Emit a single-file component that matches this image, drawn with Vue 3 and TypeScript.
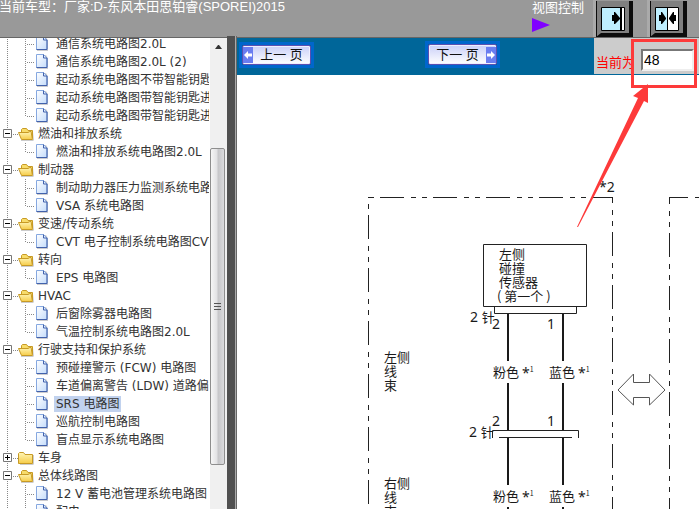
<script setup lang="ts">
import { ref } from 'vue'

interface TreeRow {
  label: string
  kind: 'leaf' | 'open' | 'closed'
  last?: boolean
}

const leaf = (label: string, last = false): TreeRow => ({ label, kind: 'leaf', last })
const folder = (label: string, open = true): TreeRow => ({ label, kind: open ? 'open' : 'closed' })

const rows: TreeRow[] = [
  leaf('通信系统电路图2.0L'),
  leaf('通信系统电路图2.0L (2)'),
  leaf('起动系统电路图不带智能钥匙进入'),
  leaf('起动系统电路图带智能钥匙进入'),
  leaf('起动系统电路图带智能钥匙进入', true),
  folder('燃油和排放系统'),
  leaf('燃油和排放系统电路图2.0L', true),
  folder('制动器'),
  leaf('制动助力器压力监测系统电路图'),
  leaf('VSA 系统电路图', true),
  folder('变速/传动系统'),
  leaf('CVT 电子控制系统电路图CVT', true),
  folder('转向'),
  leaf('EPS 电路图', true),
  folder('HVAC'),
  leaf('后窗除雾器电路图'),
  leaf('气温控制系统电路图2.0L', true),
  folder('行驶支持和保护系统'),
  leaf('预碰撞警示 (FCW) 电路图'),
  leaf('车道偏离警告 (LDW) 道路偏离'),
  leaf('SRS 电路图'),
  leaf('巡航控制电路图'),
  leaf('盲点显示系统电路图', true),
  folder('车身', false),
  folder('总体线路图'),
  leaf('12 V 蓄电池管理系统电路图'),
  leaf('配电'),
]

const selected = ref(20)
const page = ref('48')
</script>

<template>
  <div class="app">
    <header class="top">
      <h1 class="model">当前车型：厂家:D-东风本田思铂睿(SPOREI)2015</h1>
      <div class="view">
        <span>视图控制</span>
        <svg width="18" height="16" viewBox="0 0 18 16" aria-hidden="true">
          <path d="M0 1L18 8L0 15Z" fill="#8000ff" />
        </svg>
      </div>
      <div class="modes">
        <button class="mode" type="button" aria-label="单页视图">
          <svg width="37" height="36" viewBox="0 0 37 36">
            <path d="M0 0H37V36H0Z" fill="#0c0c0c" />
            <path d="M1 0H33V33L30 35H1Z" fill="#808080" />
            <path d="M0 36L5 32H34V0H37V36Z" fill="#0c0c0c" />
            <path d="M5.500 6.500H28.500V29.500H5.500Z" fill="#bfefff" stroke="#000" />
            <path d="M25 7H28V29H25Z" fill="#fff" />
            <path d="M24 7H26V29H24Z" />
            <path d="M16 14H18V11H19L24 17V18L19 23H18V20H16Z" />
          </svg>
        </button>
        <button class="mode" type="button" aria-label="双页视图">
          <svg width="37" height="36" viewBox="0 0 37 36">
            <path d="M0 0H37V36H0Z" fill="#0c0c0c" />
            <path d="M1 0H33V33L30 35H1Z" fill="#808080" />
            <path d="M0 36L5 32H34V0H37V36Z" fill="#0c0c0c" />
            <path d="M5.500 6.500H28.500V29.500H5.500Z" fill="#fff" stroke="#000" />
            <path d="M6 7H17V29H6Z" fill="#bfefff" />
            <path d="M17 7H18V29H17Z" />
            <path d="M9 14H11V11H12L16 17V18L12 23H11V20H9Z" />
            <path d="M26 14H24V11H23L19 17V18L23 23H24V20H26Z" />
          </svg>
        </button>
        <button class="mode" type="button" aria-label="全页视图">
          <svg width="37" height="36" viewBox="0 0 37 36">
            <path d="M0 0H37V36H0Z" fill="#0c0c0c" />
            <path d="M1 0H33V33L30 35H1Z" fill="#808080" />
          </svg>
        </button>
      </div>
    </header>

    <div class="body">
      <nav class="side">
        <ul class="tree">
          <li
            v-for="(row, i) in rows"
            :key="i"
            class="row"
            :class="[row.kind, { last: row.last, selected: i === selected }]"
          >
            <template v-if="row.kind === 'leaf'">
              <span class="trunk"></span>
              <span class="branch"></span>
              <svg class="icon" width="16" height="18" viewBox="0 0 16 18" aria-hidden="true">
                <path d="M2 2H11L13 5V16H2Z" fill="#9a9aa0" opacity="0.500" />
                <path d="M1.500 1.500H8.500L12 5V14.500H1.500Z" fill="url(#sheet)" stroke="#86a8e0" />
                <path d="M8.500 1.500V5H12V14.500H1.500" fill="none" stroke="#4262ac" />
              </svg>
            </template>
            <template v-else>
              <button class="toggle" type="button" :aria-label="row.kind === 'open' ? '收起' : '展开'">
                <svg width="12" height="18" viewBox="0 0 12 18">
                  <path d="M3.500 4.500H11.500V12.500H3.500Z" fill="#fff" stroke="#777" />
                  <path d="M5 8H10V9H5Z" />
                  <path v-if="row.kind === 'closed'" d="M7 6H8V11H7Z" />
                </svg>
              </button>
              <span class="link"></span>
              <svg class="icon folder" width="18" height="18" viewBox="0 0 18 18" aria-hidden="true">
                <template v-if="row.kind === 'open'">
                  <path d="M3 15H15L16 7V15L15 16H3Z" fill="#9a9a9a" opacity="0.500" />
                  <path d="M3.500 13V4.500L4.500 3.500H8.500L10 5.500H14.500V13Z" fill="#f8dc6a" stroke="#c79a25" />
                  <path d="M0.500 7.500H10L12 6.500H13L14.500 14.500H3.500Z" fill="url(#gold)" stroke="#c79a25" />
                </template>
                <template v-else>
                  <path d="M2 15H15V6H16V15L15 16H2Z" fill="#9a9a9a" opacity="0.500" />
                  <path d="M0.500 14.500V4.500L1.500 3.500H5.500L7 5.500H14.500V14.500Z" fill="url(#gold)" stroke="#c79a25" />
                </template>
              </svg>
            </template>
            <a class="label" href="#" @click.prevent="selected = i">{{ row.label }}</a>
          </li>
        </ul>
        <div class="scroll" aria-hidden="true">
          <svg class="up" width="17" height="17" viewBox="0 0 17 17">
            <path d="M5 11L8 7H9L12 11Z" fill="#333" />
          </svg>
          <div class="thumb"><i></i><i></i><i></i></div>
        </div>
      </nav>

      <div class="divider"></div>

      <main class="main">
        <div class="bar">
          <button class="pager prev" type="button">
            <span class="face">
              <span class="cap"><svg width="10" height="16" viewBox="0 0 10 16"><path d="M1 8L5 4V6.500H9V9.500H5V12Z" fill="#fff" /></svg></span>
              <span class="word">上一 页</span>
            </span>
          </button>
          <button class="pager next" type="button">
            <span class="face">
              <span class="word">下一 页</span>
              <span class="cap"><svg width="10" height="16" viewBox="0 0 10 16"><path d="M9 8L5 4V6.500H1V9.500H5V12Z" fill="#fff" /></svg></span>
            </span>
          </button>
          <div class="current">
            <label for="page">当前为</label>
            <input id="page" v-model="page" type="text" />
          </div>
        </div>

        <svg class="diagram" width="462" height="434" viewBox="237 75 462 434">
          <defs>
            <linearGradient id="sheet" x1="0" y1="0" x2="1" y2="1">
              <stop offset="0" stop-color="#fff" />
              <stop offset="1" stop-color="#c4dcfb" />
            </linearGradient>
            <linearGradient id="gold" x1="0" y1="0" x2="0" y2="1">
              <stop offset="0" stop-color="#fff6b8" />
              <stop offset="1" stop-color="#f6cc48" />
            </linearGradient>
          </defs>
          <g class="dash">
            <path d="M368 197.500H613" stroke-dashoffset="41" />
            <path d="M368.500 197V509" stroke-dashoffset="35" />
            <path d="M612.500 197V509" stroke-dashoffset="18" />
            <path d="M669 197.500H699" stroke-dashoffset="5" />
            <path d="M669.500 197V509" stroke-dashoffset="17" />
          </g>
          <g class="line">
            <path d="M483.500 244.500H586.500V306.500H483.500Z" />
            <path d="M494.500 306.500V313.500H576.500V306.500" />
            <path d="M492.500 438V430.500H578.500V438M499 437.500H572" />
          </g>
          <path class="wire" d="M508 314V361M508 383V430M508 438V485M508 507V509M563 314V361M563 383V430M563 438V485M563 507V509" />
          <path class="double" d="M618 390L633.500 374V382.500H649.500V374L665 390L649.500 405V397.500H633.500V405Z" />
          <g class="text">
            <text class="num" x="599" y="192">*2</text>
            <text x="499" y="259">左侧</text>
            <text x="499" y="273">碰撞</text>
            <text x="499" y="287">传感器</text>
            <text x="497" y="301">( 第一个 )</text>
            <text class="num" x="470" y="322">2 <tspan class="cjk">针</tspan></text>
            <text class="num" x="492" y="329">2</text>
            <text class="num" x="547" y="329">1</text>
            <text x="384" y="362">左侧</text>
            <text x="384" y="376">线</text>
            <text x="384" y="390">束</text>
            <text x="493" y="377">粉色 <tspan class="num" dy="1">*</tspan><tspan class="sup" dy="-6">1</tspan></text>
            <text x="549" y="377">蓝色 <tspan class="num" dy="1">*</tspan><tspan class="sup" dy="-6">1</tspan></text>
            <text class="num" x="492" y="426">2</text>
            <text class="num" x="547" y="426">1</text>
            <text class="num" x="469" y="437">2 <tspan class="cjk">针</tspan></text>
            <text x="384" y="488">右侧</text>
            <text x="384" y="502">线</text>
            <text x="384" y="516">束</text>
            <text x="493" y="501">粉色 <tspan class="num" dy="1">*</tspan><tspan class="sup" dy="-6">1</tspan></text>
            <text x="549" y="501">蓝色 <tspan class="num" dy="1">*</tspan><tspan class="sup" dy="-6">1</tspan></text>
          </g>
        </svg>

        <svg class="callout" width="130" height="200" viewBox="569 34 130 200" aria-hidden="true">
          <path d="M632.500 40.500H695.500V86.500H632.500Z" fill="none" stroke="#fd3a3a" stroke-width="3" />
          <path d="M648 84L633 96L638 98L577 227L578 227L644 101L648 103Z" fill="#fd3a3a" />
        </svg>
      </main>
    </div>
  </div>
</template>

<style>
body {
  background: #fff;
  overflow: hidden;
}
</style>

<style scoped>
.app {
  display: flex;
  flex-direction: column;
  height: 100vh;
  overflow: hidden;
  font-family: "Liberation Sans", "Noto Sans CJK SC", sans-serif;
}
button {
  padding: 0;
  border: 0;
  background: none;
  font: inherit;
}
svg {
  display: block;
  flex: none;
}
.top {
  display: flex;
  flex: none;
  height: 37px;
  background: #999;
  border-bottom: 1px solid #666;
  color: #fff;
  font-size: 13px;
  line-height: 16px;
  overflow: hidden;
}
.model {
  flex: 1;
  margin: 0 0 0 -1px;
  font-size: 13px;
  font-weight: 400;
  line-height: 14px;
  white-space: nowrap;
}
.view {
  flex: none;
  width: 61px;
}
.view svg {
  margin-top: 1px;
}
.modes {
  display: flex;
  flex: none;
  gap: 14px;
  width: 106px;
  overflow: hidden;
}
.mode {
  flex: none;
  border-left: 3px solid #aaa;
}
.body {
  display: flex;
  flex: 1;
  min-height: 0;
}
.side {
  display: flex;
  flex: none;
  width: 227px;
  overflow: hidden;
}
.tree {
  flex: 1;
  min-width: 0;
  margin: -3px 0 0;
  padding: 0;
  list-style: none;
  overflow: hidden;
  color: #333;
  font-family: "DejaVu Sans", "Noto Sans CJK SC", sans-serif;
  font-size: 12px;
}
.row {
  display: flex;
  align-items: center;
  height: 18px;
  white-space: nowrap;
  background: repeating-linear-gradient(#888 0 1px, #fff 1px 2px) 7px 0 / 1px 18px no-repeat;
}
.trunk {
  flex: none;
  align-self: flex-start;
  width: 1px;
  height: 18px;
  margin-left: 25px;
  background: repeating-linear-gradient(#888 0 1px, #fff 1px 2px);
}
.last .trunk {
  height: 10px;
}
.branch {
  flex: none;
  width: 9px;
  height: 1px;
  background: repeating-linear-gradient(90deg, #fff 0 1px, #888 1px 2px);
}
.icon {
  margin-right: 3px;
}
.folder {
  margin-right: 1px;
}
.toggle {
  flex: none;
}
.link {
  flex: none;
  width: 6px;
  height: 1px;
  background: repeating-linear-gradient(90deg, #fff 0 1px, #888 1px 2px);
}
.label {
  padding: 0 2px 0 1px;
  line-height: 16px;
  color: inherit;
  text-decoration: none;
}
.leaf .label {
  padding-left: 2px;
}
.selected .label {
  background: #c1d2ee;
}
.scroll {
  flex: none;
  width: 17px;
  border-left: 1px solid #fff;
  background: #f0f0f0;
}
.thumb {
  display: flex;
  flex-direction: column;
  align-items: center;
  justify-content: center;
  gap: 2px;
  width: 13px;
  height: 315px;
  margin-top: 93px;
  border: 1px solid #8e8e8e;
  border-radius: 2px;
  background: linear-gradient(90deg, #f6f6f6, #e2e2e4 45%, #c6c6c9 55%, #dcdcde);
}
.thumb i {
  width: 7px;
  height: 1px;
  background: #555;
}
.divider {
  flex: none;
  width: 8px;
  margin-top: -2px;
  background: #505050;
  border-right: 1px solid #aaa;
  box-shadow: 1px 0 0 #666;
}
.main {
  position: relative;
  flex: 1;
  min-width: 0;
  margin-left: 1px;
  overflow: hidden;
}
.bar {
  display: flex;
  align-items: flex-start;
  height: 37px;
  background: #069;
}
.pager {
  flex: none;
  border: 3px solid #06c;
}
.prev {
  margin: 4px 0 0 2px;
}
.next {
  margin: 3px 0 0 111px;
}
.face {
  display: flex;
  align-items: center;
  height: 18px;
  border: 1px solid #5a4fb0;
  border-radius: 2px;
  background: linear-gradient(#c9cff8, #fff);
  box-shadow: inset 0 0 0 1px #eef;
}
.next .face {
  height: 19px;
}
.word {
  width: 57px;
  color: #111;
  font-size: 13px;
  font-weight: 400;
  line-height: 18px;
  text-align: center;
  white-space: pre;
}
.cap {
  background: #6a7df0;
}
.current {
  display: flex;
  align-items: center;
  flex: none;
  gap: 6px;
  width: 103px;
  height: 36px;
  margin-left: auto;
  padding-left: 2px;
  background: #ccc;
}
.current label {
  flex: none;
  padding-top: 13px;
  color: #f00;
  font-size: 13px;
  line-height: 18px;
}
.current input {
  box-sizing: border-box;
  width: 53px;
  height: 22px;
  margin-top: 8px;
  padding: 0 1px;
  border: 2px solid;
  border-color: #777 #eee #eee #777;
  border-radius: 0;
  background: #fff;
  color: #000;
  font: 14px "Liberation Sans", sans-serif;
  outline: none;
}
.diagram {
  overflow: hidden;
}
.dash path {
  fill: none;
  stroke: #222;
  stroke-dasharray: 24 7 5 6 5 6;
}
.line path {
  fill: none;
  stroke: #222;
}
.wire {
  stroke: #1a1a1a;
  stroke-width: 2px;
}
.double {
  fill: #fff;
  stroke: #555;
}
.text text {
  fill: #1a1a1a;
  font-family: "Noto Sans CJK SC", sans-serif;
  font-size: 13px;
  white-space: pre;
}
.text .num {
  font-family: "Noto Sans", "Noto Sans CJK SC", sans-serif;
  font-size: 14px;
}
.text .cjk {
  font-size: 13px;
}
.text .sup {
  font-size: 7px;
}
.callout {
  position: absolute;
  top: -4px;
  right: 0;
}
</style>
